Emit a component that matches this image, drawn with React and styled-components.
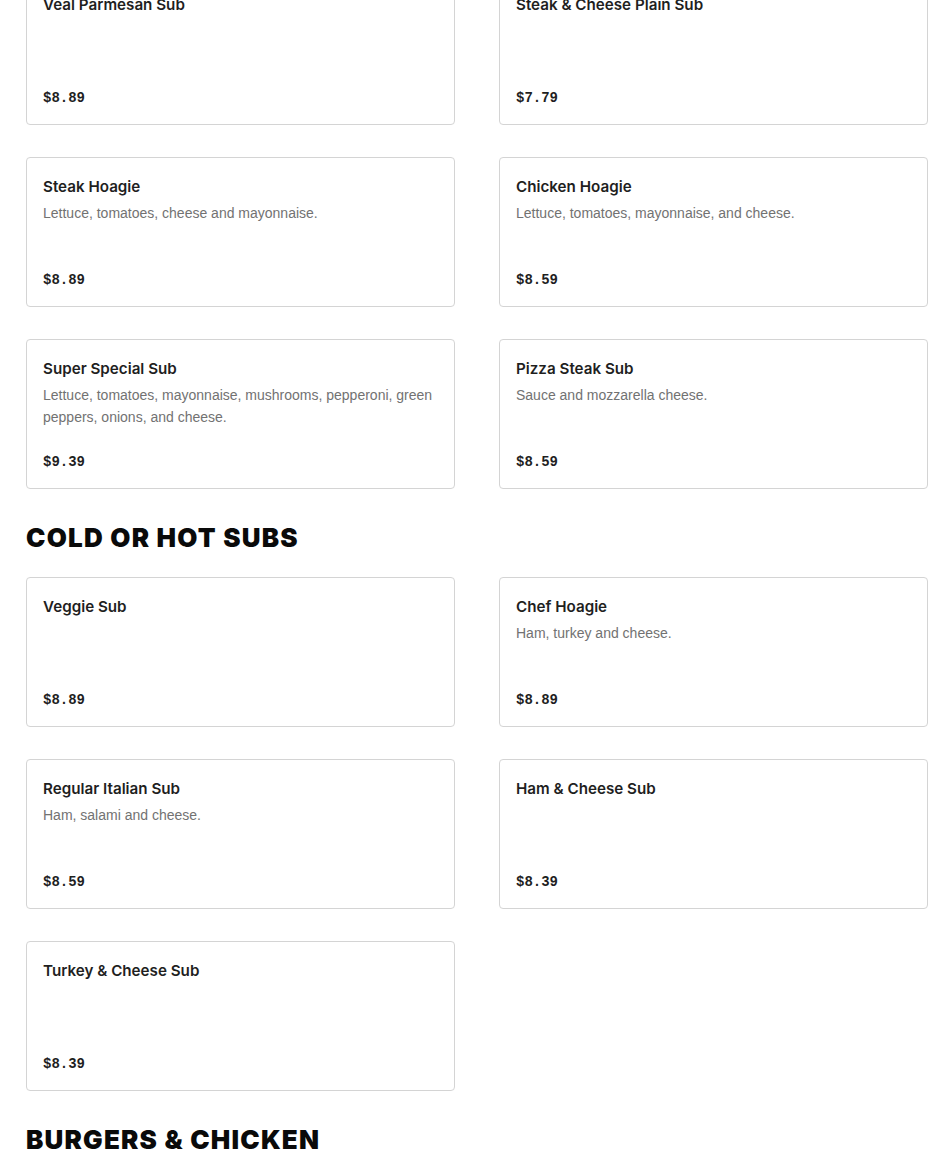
import React from 'react';
import styled, { createGlobalStyle } from 'styled-components';

const GlobalStyle = createGlobalStyle`
  body {
    margin: 0;
    background: #ffffff;
    font-family: 'Inter', 'Liberation Sans', sans-serif;
    overflow: hidden;
  }
`;

const Page = styled.div`
  margin-top: -25px;
  padding: 0 22px 0 26px;
  display: flex;
  flex-direction: column;
`;

const Section = styled.section`
  display: flex;
  flex-direction: column;
  & + & {
    margin-top: 32px;
  }
`;

const Heading = styled.h2`
  margin: 0 0 22px;
  font-family: 'Inter', 'Liberation Sans', sans-serif;
  font-weight: 900;
  font-size: 26px;
  line-height: 34px;
  color: #0a0a0a;
  letter-spacing: 1.2px;
`;

const Grid = styled.div`
  display: grid;
  grid-template-columns: 429px 429px;
  column-gap: 44px;
  row-gap: 32px;
`;

const Card = styled.div`
  box-sizing: border-box;
  height: 150px;
  padding: 17px 16px 15px;
  border: 1px solid #d4d4d4;
  border-radius: 4px;
  display: flex;
  flex-direction: column;
  background: #fff;
`;

const Title = styled.div`
  font-size: 15.2px;
  font-weight: 600;
  line-height: 24px;
  color: #1f1f1f;
`;

const Desc = styled.div`
  margin-top: 3px;
  font-family: 'Liberation Sans', Arial, sans-serif;
  font-size: 14px;
  line-height: 22px;
  color: #727272;
`;

const Price = styled.div`
  margin-top: auto;
  font-family: 'Liberation Mono', 'DejaVu Sans Mono', monospace;
  font-weight: 700;
  font-size: 14px;
  line-height: 22px;
  color: #1f1f1f;
`;

const sections = [
  {
    title: null,
    items: [
      { name: 'Veal Parmesan Sub', price: '$8.89' },
      { name: 'Steak & Cheese Plain Sub', price: '$7.79' },
      { name: 'Steak Hoagie', desc: 'Lettuce, tomatoes, cheese and mayonnaise.', price: '$8.89' },
      { name: 'Chicken Hoagie', desc: 'Lettuce, tomatoes, mayonnaise, and cheese.', price: '$8.59' },
      {
        name: 'Super Special Sub',
        desc: 'Lettuce, tomatoes, mayonnaise, mushrooms, pepperoni, green peppers, onions, and cheese.',
        price: '$9.39',
      },
      { name: 'Pizza Steak Sub', desc: 'Sauce and mozzarella cheese.', price: '$8.59' },
    ],
  },
  {
    title: 'COLD OR HOT SUBS',
    items: [
      { name: 'Veggie Sub', price: '$8.89' },
      { name: 'Chef Hoagie', desc: 'Ham, turkey and cheese.', price: '$8.89' },
      { name: 'Regular Italian Sub', desc: 'Ham, salami and cheese.', price: '$8.59' },
      { name: 'Ham & Cheese Sub', price: '$8.39' },
      { name: 'Turkey & Cheese Sub', price: '$8.39' },
    ],
  },
  { title: 'BURGERS & CHICKEN', items: [] },
];

const MenuCard = ({ name, desc, price }) => (
  <Card>
    <Title>{name}</Title>
    {desc && <Desc>{desc}</Desc>}
    <Price>{price}</Price>
  </Card>
);

export default function App() {
  return (
    <>
      <GlobalStyle />
      <Page>
        {sections.map((s, i) => (
          <Section key={i}>
            {s.title && <Heading>{s.title}</Heading>}
            {s.items.length > 0 && (
              <Grid>
                {s.items.map((it) => (
                  <MenuCard key={it.name} {...it} />
                ))}
              </Grid>
            )}
          </Section>
        ))}
      </Page>
    </>
  );
}
